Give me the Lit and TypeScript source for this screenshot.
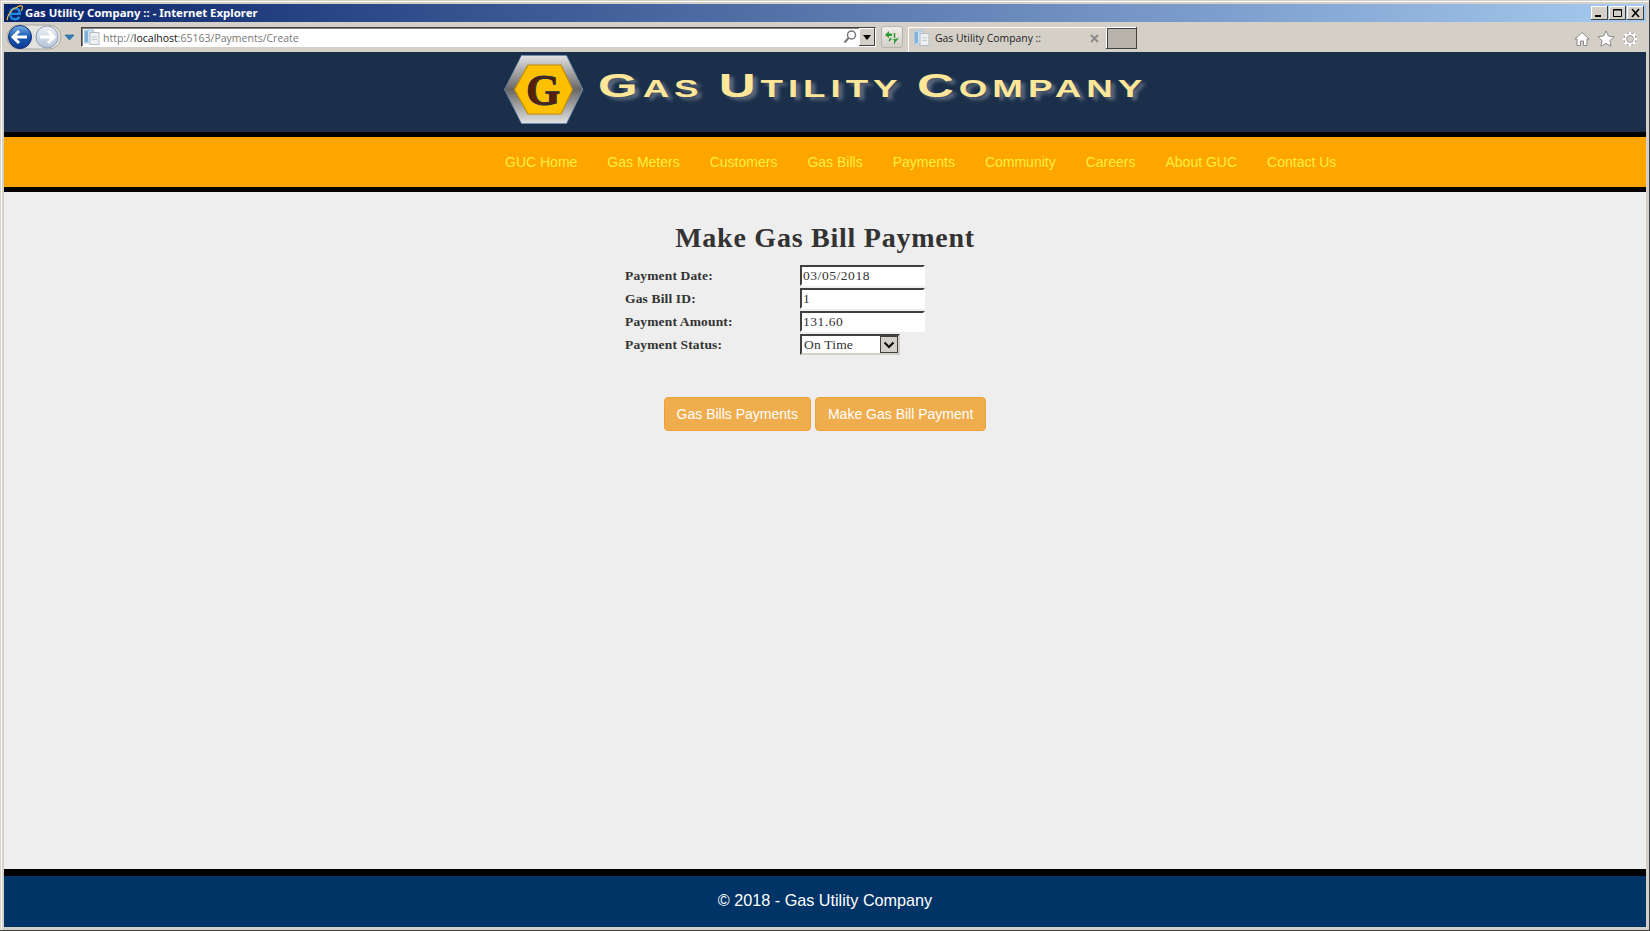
import { LitElement, html, css } from "lit";
import { customElement } from "lit/decorators.js";

const NAV = ["GUC Home", "Gas Meters", "Customers", "Gas Bills", "Payments", "Community", "Careers", "About GUC", "Contact Us"];
const pageIcon = html`<svg class="page" width="16" height="16" viewBox="0 0 16 16"><rect x="0.5" y="1" width="9" height="13" fill="#cfe2f3" stroke="#a9c6de"/><rect x="1" y="2" width="3" height="11" fill="#7fb2dc"/><rect x="6" y="3.5" width="9" height="12" fill="#eef0f2" stroke="#b9bdc2"/><path d="M8 8h5M8 10.5h5" stroke="#c4c8cc"/></svg>`;

@customElement("app-root")
export class AppRoot extends LitElement {
  static styles = css`
    :host { display: block; }
    * { box-sizing: border-box; }
    .window { width: 1650px; height: 931px; background: #d4d0c8; display: flex; flex-direction: column; padding: 4px 4px 4px 4px; box-shadow: inset -1px -1px 0 #404040, inset 1px 1px 0 #d4d0c8, inset 2px 2px 0 #fff; overflow: hidden; }
    .titlebar { flex: 0 0 18px; background: linear-gradient(90deg, #0a246a, #a6caf0); display: flex; align-items: center; color: #fff; font: bold 11.4px "Noto Sans", sans-serif; padding-left: 2px; gap: 1px; }
    .titlebar > span { margin-top: -2px; }
    .winbtns { margin-left: auto; display: flex; margin-right: 2px; gap: 1px; }
    .winbtn { width: 17px; height: 14px; background: #d4d0c8; box-shadow: inset -1px -1px 0 #404040, inset 1px 1px 0 #fff; display: flex; align-items: center; justify-content: center; }
    .toolbar { flex: 0 0 30px; display: flex; align-items: flex-start; position: relative; }
    .nav-btns { display: flex; align-items: center; margin: 2px 0 0 1px; height: 26px; width: 72px; }
    .address { margin: 5px 0 0 4px; width: 795px; height: 20px; background: #fff; border: 1px solid; border-color: #404040 #fff #fff #404040; box-shadow: inset 1px 1px 0 #808080; display: flex; align-items: center; padding-left: 2px; font: 10.5px "Open Sans", sans-serif; color: #777; }
    .address .page { margin-right: 3px; }
    .address span { margin-top: 1px; }
    .address b { font-weight: 400; color: #111; }
    .address .tools { margin-left: auto; display: flex; align-items: center; gap: 2px; }
    .drop { width: 16px; height: 18px; background: #d4d0c8; box-shadow: inset -1px -1px 0 #404040, inset 1px 1px 0 #fff; display: flex; align-items: center; justify-content: center; }
    .refresh { margin: 4px 0 0 5px; width: 22px; height: 22px; border: 1px solid #b5b5b0; border-radius: 3px; background: linear-gradient(#f0eeea, #d4d0c8); display: flex; align-items: center; justify-content: center; }
    .tab { margin: 5px 0 0 5px; width: 197px; height: 25px; border-left: 1px solid #fff; border-top: 1px solid #fff; display: flex; align-items: center; padding: 0 6px 4px 5px; font: 10.4px "Open Sans", sans-serif; color: #1c1c1c; gap: 5px; }
    .tab .x { margin-left: auto; display: flex; }
    .newtab { margin: 5px 0 0 1px; width: 31px; height: 22px; background: #b8b4ac; box-shadow: inset -1px -1px 0 #404040, inset 1px 1px 0 #fff, inset 2px 2px 0 #404040; }
    .right-icons { margin: 8px 8px 0 auto; display: flex; gap: 7px; align-items: center; }
    .head { flex: 0 0 80px; background: #1b2f4a; display: flex; padding-left: 500px; }
    .logo { margin-top: 3px; }
    .brand { margin: 15px 0 0 12px; color: #ffe699; font: bold 24.5px "Liberation Sans", sans-serif; letter-spacing: 3.3px; text-shadow: 3px 3px 3px #5d6a7d; display: inline-block; transform: scaleX(1.5); transform-origin: left top; white-space: nowrap; line-height: 36px; height: 36px; }
    .brand .big { font-size: 34px; }
    .sep { background: #000; }
    .s5 { flex: 0 0 5px; }
    .s7 { flex: 0 0 7px; }
    .menu { flex: 0 0 50px; background: #ffa500; display: flex; align-items: center; padding-left: 501px; gap: 30px; font: 14px "Liberation Sans", sans-serif; color: #ffef40; }
    main { flex: 1; background: #eee; display: flex; flex-direction: column; align-items: center; font-family: "Liberation Serif", serif; color: #333; }
    h1 { margin: 28px 0 0; font: bold 28px/36px "Liberation Serif", serif; letter-spacing: 0.75px; }
    .form { margin-top: 8px; width: 400px; display: grid; grid-template-columns: 175px 1fr; grid-auto-rows: 23px; align-items: center; justify-items: start; }
    label { font: bold 13.5px "Liberation Serif", serif; letter-spacing: 0.15px; }
    input, select { font: 13.5px "Liberation Serif", serif; color: #333; background: #fff; border: 2px solid; border-color: #404040 #fff #fff #404040; border-radius: 0; outline: none; padding: 0 1px; margin: 0; height: 21px; width: 125px; letter-spacing: 0.55px; }
    .sel { position: relative; display: flex; width: 100px; height: 21px; }
    select { appearance: none; width: 100px; padding-left: 2px; letter-spacing: 0.2px; border-color: #404040 #d4d0c8 #d4d0c8 #404040; }
    .arrow { position: absolute; right: 2px; top: 2px; width: 18px; height: 17px; background: #d4d0c8; border: 1px solid #404040; display: flex; align-items: center; justify-content: center; pointer-events: none; }
    .buttons { margin-top: 41px; display: flex; gap: 4px; }
    button { height: 34px; padding: 0 12px 1px; background: #f0ad4e; border: 1px solid #eea236; border-radius: 4px; color: #fff; font: 14px "Liberation Sans", sans-serif; }
    footer { flex: 0 0 51px; background: #036; color: #fff; display: flex; align-items: center; justify-content: center; font: 16.2px "Liberation Sans", sans-serif; padding-bottom: 3px; }
  `;

  render() {
    return html`<div class="window">
      <div class="titlebar">
        <svg width="18" height="18" viewBox="0 0 18 18"><path d="M4.500 9.800h9.300c0-3.500-2-5.500-4.800-5.500-3 0-5 2.500-5 5.500s2 5.500 5 5.500c2 0 3.500-1 4.300-2.600" fill="none" stroke="#1e8ae6" stroke-width="2.300"/><path d="M1.500 16C.5 13 4.500 5.500 12.500 2.300c2.500-1 4-.8 4 1 0 1-.6 2.500-1.500 3.500" fill="none" stroke="#f2c230" stroke-width="1.200"/></svg>
        <span>Gas Utility Company :: - Internet Explorer</span>
        <div class="winbtns">
          <div class="winbtn"><svg width="11" height="10"><rect x="1" y="7" width="6" height="2"/></svg></div>
          <div class="winbtn"><svg width="11" height="10"><path d="M1.500 1.500h8v7h-8zM1 2h9" fill="none" stroke="#000"/></svg></div>
          <div class="winbtn"><svg width="11" height="10"><path d="M2 1l7 8M9 1l-7 8" stroke="#000" stroke-width="1.600"/></svg></div>
        </div>
      </div>
      <div class="toolbar">
        <div class="nav-btns">
          <svg width="72" height="26" viewBox="0 0 72 26">
            <defs>
              <linearGradient id="bk" x1="0" y1="0" x2="0" y2="1"><stop offset="0" stop-color="#7ab0ea"/><stop offset=".5" stop-color="#1a55b0"/><stop offset="1" stop-color="#0e3d96"/></linearGradient>
              <linearGradient id="fw" x1="0" y1="0" x2="0" y2="1"><stop offset="0" stop-color="#eef2f7"/><stop offset="1" stop-color="#b4c3d6"/></linearGradient>
            </defs>
            <rect x="2" y="1" width="54" height="24" rx="12" fill="#e4e2dc" stroke="#aaa89f"/>
            <circle cx="15" cy="13" r="11.500" fill="url(#bk)" stroke="#0c2f72"/>
            <path d="M8 13h14M14 7l-6 6 6 6" fill="none" stroke="#fff" stroke-width="3"/>
            <circle cx="42" cy="13" r="11" fill="url(#fw)" stroke="#8e9db0"/>
            <path d="M49 13H35M43 7l6 6-6 6" fill="none" stroke="#fff" stroke-width="3"/>
            <path d="M60 11h9l-4.500 5z" fill="#2f7fc0" stroke="#14507f" stroke-width=".6"/>
          </svg>
        </div>
        <div class="address">
          ${pageIcon}
          <span>http://<b>localhost</b>:65163/Payments/Create</span>
          <div class="tools">
            <svg width="14" height="14" viewBox="0 0 14 14"><circle cx="8.500" cy="5" r="4" fill="none" stroke="#777" stroke-width="1.500"/><path d="M5.500 8L1.500 12.500" stroke="#777" stroke-width="2"/></svg>
            <div class="drop"><svg width="8" height="5"><path d="M0 0h8l-4 5z"/></svg></div>
          </div>
        </div>
        <div class="refresh">
          <svg width="16" height="16" viewBox="0 0 16 16"><path d="M1 6l4-4v2.500h3V7H5v2zM15 9l-4 4.500V15h-1v-4H7z" fill="#2f9a2f"/><path d="M10.500 9V4M5 12l2-3" stroke="#2f9a2f" stroke-width="1.500"/></svg>
        </div>
        <div class="tab">
          ${pageIcon}
          <span>Gas Utility Company ::</span>
          <span class="x"><svg width="9" height="9"><path d="M1 1l7 7M8 1l-7 7" stroke="#8c8c8c" stroke-width="2"/></svg></span>
        </div>
        <div class="newtab"></div>
        <div class="right-icons">
          <svg width="16" height="16" viewBox="0 0 16 16"><path d="M8 1.500L.8 8H3v6.500h3.500V10h3v4.500H13V8h2.200z" fill="#fff" stroke="#8a8a8a"/></svg>
          <svg width="18" height="17" viewBox="0 0 18 17"><path d="M9 .8l2.400 5.300 5.800.6-4.300 3.900 1.200 5.700L9 13.400l-5.100 2.900 1.200-5.700L.8 6.700l5.800-.6z" fill="#fff" stroke="#8a8a8a"/></svg>
          <svg width="16" height="16" viewBox="0 0 16 16"><circle cx="8" cy="8" r="4.700" fill="none" stroke="#8a8a8a" stroke-width="3.400"/><circle cx="8" cy="8" r="4.700" fill="none" stroke="#fff" stroke-width="2"/><path d="M8 .8v2.500M8 12.700v2.500M.8 8h2.500M12.700 8h2.500M2.900 2.900l1.800 1.800M11.300 11.300l1.800 1.800M13.100 2.900l-1.800 1.800M4.700 11.300l-1.800 1.800" stroke="#fff" stroke-width="2.200"/></svg>
        </div>
      </div>
      <div class="head">
        <svg class="logo" width="82" height="72" viewBox="0 0 82 72">
          <defs><linearGradient id="sv" x1="0" y1="0" x2="0" y2="1"><stop offset="0" stop-color="#e2e2e2"/><stop offset=".5" stop-color="#676767"/><stop offset="1" stop-color="#e2e2e2"/></linearGradient></defs>
          <path d="M.5 34.500L17.500 .5h45l16.500 34-16.500 34h-45z" fill="url(#sv)" stroke="#6f8fc0" stroke-dasharray="1.500 .7"/>
          <path d="M10.500 34.500L24 10h33l11.500 24.500L57 59H24z" fill="#ffc000" stroke="#c08c00" stroke-width="1.200"/>
          <text x="39" y="49.500" text-anchor="middle" font-family="Liberation Serif" font-weight="700" font-size="44" fill="#5a1e00" stroke="#1b2f4a" stroke-width=".9">G</text>
        </svg>
        <div class="brand"><span class="big">G</span>AS <span class="big">U</span>TILITY <span class="big">C</span>OMPANY</div>
      </div>
      <div class="sep s5"></div>
      <nav class="menu">${NAV.map((n) => html`<span>${n}</span>`)}</nav>
      <div class="sep s5"></div>
      <main>
        <h1>Make Gas Bill Payment</h1>
        <div class="form">
          <label>Payment Date:</label><input value="03/05/2018" />
          <label>Gas Bill ID:</label><input value="1" />
          <label>Payment Amount:</label><input value="131.60" />
          <label>Payment Status:</label>
          <div class="sel">
            <select><option>On Time</option></select>
            <span class="arrow"><svg width="12" height="8" viewBox="0 0 12 8"><path d="M1.500 1.500L6 6l4.500-4.500" fill="none" stroke="#000" stroke-width="2"/></svg></span>
          </div>
        </div>
        <div class="buttons"><button>Gas Bills Payments</button><button>Make Gas Bill Payment</button></div>
      </main>
      <div class="sep s7"></div>
      <footer>© 2018 - Gas Utility Company</footer>
    </div>`;
  }
}
